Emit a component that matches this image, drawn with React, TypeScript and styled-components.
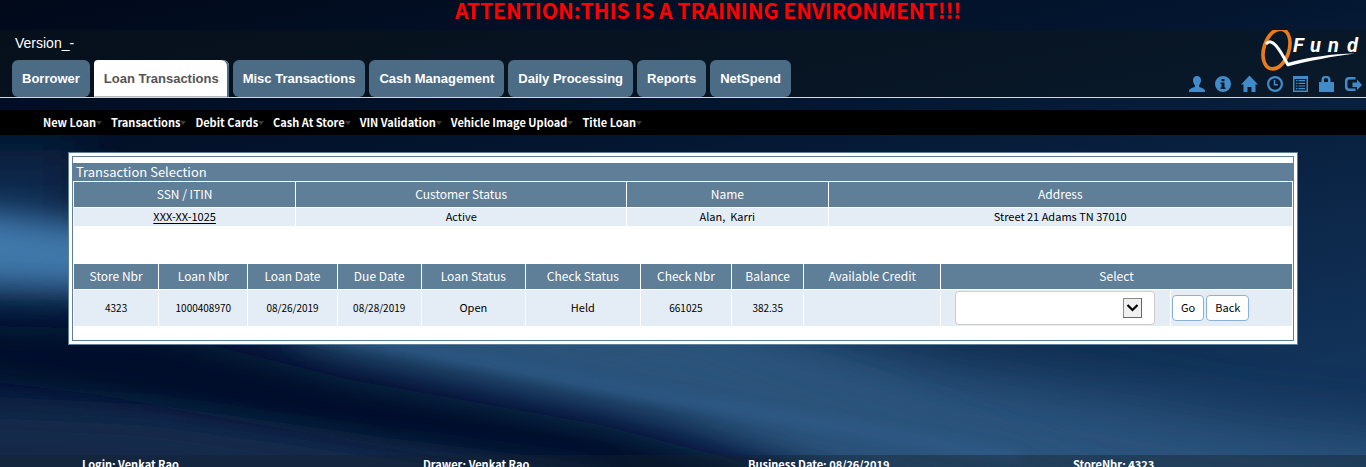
import React from "react";
import styled, { createGlobalStyle } from "styled-components";

const sans = `"Noto Sans CJK SC", "Noto Sans", sans-serif`;
const arial = `"Liberation Sans", Arial, sans-serif`;

const GlobalStyle = createGlobalStyle`
  *, *::before, *::after { box-sizing: border-box; }
  body {
    margin: 0;
    background: #020f26;
    font-family: ${sans};
    font-size: 11px;
    line-height: 18px;
    color: #000;
  }
`;

const Page = styled.div`
  position: relative;
  display: flex;
  flex-direction: column;
  height: 100vh;
  overflow: hidden;
`;

const Backdrop = styled.svg`
  position: absolute;
  inset: 0;
  width: 100%;
  height: 100%;
  z-index: -1;
`;

const Banner = styled.h1`
  margin: 0;
  height: 30px;
  padding-left: 50px;
  font-size: 21px;
  line-height: 20px;
  font-weight: 700;
  text-align: center;
  color: #f00;
`;

const Header = styled.header`
  display: flex;
  justify-content: space-between;
  height: 68px;
  border-bottom: 1px solid #d3d8de;
  background: rgba(12, 22, 26, 0.5);
`;

const HeaderLeft = styled.div`
  display: flex;
  flex-direction: column;
  justify-content: space-between;
  padding-left: 12px;
`;

const Version = styled.div`
  padding: 4px 3px;
  font: 14px/18px ${arial};
  color: #fff;
`;

const Tabs = styled.nav`
  display: flex;
  gap: 4px;
`;

const Tab = styled.a<{ $active?: boolean }>`
  padding: 0 10px;
  border-radius: 6px;
  font: bold 13px/37px ${arial};
  white-space: nowrap;
  text-decoration: none;
  color: ${(p) => (p.$active ? "#555" : "#fff")};
  background: ${(p) => (p.$active ? "#fff" : "#4c6b85")};
  ${(p) =>
    p.$active &&
    "border-radius: 4px 6px 0 0; box-shadow: inset -2px 0 #4c6b85, inset 0 -1px #b5bac0;"}
`;

const HeaderRight = styled.div`
  display: flex;
  flex-direction: column;
  align-items: flex-end;
  justify-content: space-between;
  padding: 0 5px 5px 0;
`;

const Tools = styled.div`
  display: flex;
  gap: 10px;
`;

const ToolButton = styled.button`
  width: 16px;
  height: 16px;
  padding: 0;
  border: 0;
  background: none;
  color: #428bca;

  svg {
    display: block;
    overflow: visible;
  }
`;

const MenuBar = styled.nav`
  display: flex;
  gap: 9px;
  margin-top: 12px;
  padding-left: 43px;
  height: 25px;
  background: #000;
`;

const MenuLink = styled.a`
  display: flex;
  align-items: center;
  font-size: 11px;
  font-weight: 700;
  line-height: 25px;
  white-space: nowrap;
  text-decoration: none;
  color: #fff;

  &::after {
    content: "";
    border: 3px solid transparent;
    border-top: 4px solid #3a3a3a;
    border-bottom: 0;
  }
`;

const Main = styled.main`
  flex: 1;
  min-height: 0;
  padding: 17px 68px 0;
`;

const Panel = styled.section`
  padding: 3px;
  border: 1px solid #5f7e97;
  background: #fff;
`;

const PanelInner = styled.div`
  padding: 6px 0 13px;
  border: 1px solid #5f7e97;
`;

const PanelTitle = styled.h2`
  margin: 0;
  padding-left: 3px;
  font-size: 13px;
  font-weight: 400;
  line-height: 18px;
  color: #fff;
  background: #5f7e97;
`;

const DataTable = styled.table`
  width: 100%;
  table-layout: fixed;
  border-collapse: separate;
  border-spacing: 1px;

  & + & {
    margin-top: 36px;
  }
`;

const Col = styled.col<{ $share: number }>`
  width: ${(p) => p.$share * 100}%;
`;

const HeadCell = styled.th`
  height: 25px;
  padding: 0 0 2px;
  font-size: 12px;
  font-weight: 400;
  color: #fff;
  background: #5f7e97;
`;

const Cell = styled.td<{ $tall?: boolean; $small?: boolean }>`
  height: ${(p) => (p.$tall ? 36 : 18)}px;
  padding: 0 0 ${(p) => (p.$small ? 0 : 2)}px;
  font-size: ${(p) => (p.$small ? 10 : 11)}px;
  line-height: 16px;
  text-align: center;
  white-space: pre;
  background: #e4edf5;
`;

const ControlCell = styled.td<{ $start: number }>`
  height: 36px;
  padding: 0 0 0 ${(p) => p.$start}px;
  background: #e4edf5;
`;

const SsnLink = styled.a`
  color: #000;
  text-decoration: underline;
  text-underline-offset: 2px;
`;

const SelectBox = styled.div`
  position: relative;
  width: 200px;
  height: 34px;

  svg {
    position: absolute;
    top: 7px;
    right: 13px;
    pointer-events: none;
  }
`;

const Select = styled.select`
  appearance: none;
  width: 100%;
  height: 100%;
  padding: 0 40px 0 12px;
  border: 1px solid #ccc;
  border-radius: 4px;
  font: 12px ${sans};
  background: #fff;
`;

const Actions = styled.div`
  display: flex;
  gap: 2px;
`;

const ActionButton = styled.button`
  height: 26px;
  padding: 0 8px 2px;
  border: 1px solid #86b3dc;
  border-radius: 4px;
  font: 11px/18px ${sans};
  color: #000;
  background: #fff;
`;

const Footer = styled.footer`
  display: grid;
  grid-template-columns: 341fr 325fr 325fr 293fr;
  height: 12px;
  padding-left: 82px;
  overflow: hidden;
  font-size: 11px;
  font-weight: 700;
  line-height: 18px;
  white-space: nowrap;
  color: #fff;
  background: rgba(20, 32, 44, 0.4);
`;

const tabs = ["Borrower", "Loan Transactions", "Misc Transactions", "Cash Management", "Daily Processing", "Reports", "NetSpend"];
const menu = ["New Loan", "Transactions", "Debit Cards", "Cash At Store", "VIN Validation", "Vehicle Image Upload", "Title Loan"];
const customerCols = [222, 331, 201, 465];
const loanCols = [85, 89, 89, 84, 104, 115, 91, 72, 137, 231, 122];
const loanHeads = ["Store Nbr", "Loan Nbr", "Loan Date", "Due Date", "Loan Status", "Check Status", "Check Nbr", "Balance", "Available Credit"];
const loan = ["4323", "1000408970", "08/26/2019", "08/28/2019", "Open", "Held", "661025", "382.35", ""];
const footer = ["Login: Venkat Rao", "Drawer: Venkat Rao", "Business Date: 08/26/2019", "StoreNbr: 4323"];

const icons: { label: string; art: React.ReactNode }[] = [
  {
    label: "User",
    art: <path d="M8 0c2.600 0 4 1.800 4 4.300 0 2-.8 3.800-2 4.900v1.300c0 .7 6 2 6 4V16H0v-1.500c0-2 6-3.300 6-4V9.200C4.800 8.100 4 6.300 4 4.300 4 1.800 5.400 0 8 0z" />,
  },
  {
    label: "Information",
    art: <path fillRule="evenodd" d="M8 0a8 8 0 1 1 0 16A8 8 0 0 1 8 0zM6.500 3v2.200h3V3zM5.500 6.500V8h1v3.500h-1V13h5v-1.500h-1v-5z" />,
  },
  {
    label: "Home",
    art: <path d="M8.500-.5 17 8.500h-2.500V16H10.500v-5h-4v5h-4V8.500H0z" />,
  },
  {
    label: "History",
    art: (
      <g fill="none" stroke="currentColor">
        <circle cx="8" cy="8" r="6.900" strokeWidth="2.200" />
        <path d="M7.500 4v4.700H11" strokeWidth="1.500" />
      </g>
    ),
  },
  {
    label: "List",
    art: (
      <path
        fillRule="evenodd"
        d="M0 0h15v16H0zM1.500 3v11.500h12V3zM3 4h1.500v1.200H3zm2.500 0H12v1.200H5.500zM3 6.700h1.500v1.200H3zm2.500 0H12v1.200H5.500zM3 9.400h1.500v1.200H3zm2.500 0H12v1.200H5.500zM3 12h1.500v1.200H3zm2.500 0H12v1.200H5.500z"
      />
    ),
  },
  {
    label: "Lock",
    art: <path fillRule="evenodd" d="M0 6H2.500V3.500C2.500 1.300 3.800 0 6 0h2C10.200 0 11.500 1.300 11.500 3.500V6h3.500v10H0zM5 6h4V3.800c0-1-.4-1.500-1.300-1.500H6.300c-.9 0-1.300.5-1.300 1.500z" />,
  },
  {
    label: "Log out",
    art: (
      <>
        <path d="M10.500 2.200H4.200Q1.200 2.200 1.200 5.200v5.600q0 3 3 3h6.300" fill="none" stroke="currentColor" strokeWidth="2.500" />
        <path d="M7.500 6.500h4.500v-3l5 5.500-5 5v-3H7.500z" />
      </>
    ),
  },
];

const total = (widths: number[]) => widths.reduce((a, b) => a + b, 0);

const Columns = ({ widths }: { widths: number[] }) => (
  <colgroup>
    {widths.map((w, i) => (
      <Col key={i} $share={w / total(widths)} />
    ))}
  </colgroup>
);

const Logo = () => (
  <svg width="102" height="41" viewBox="0 0 102 41" role="img" aria-label="QFund">
    <ellipse cx="17.500" cy="19" rx="12.500" ry="20.500" transform="rotate(18 17.500 19)" fill="none" stroke="#e87b1a" strokeWidth="3.600" />
    <path d="M7 14C13 7 20 18 29 35" fill="none" stroke="#fff" strokeWidth="3" />
    <path d="M27 33.500L30 32.500C52 27 72 24 96 23.500 72 26.500 52 30.500 28.500 36.500z" fill="#fff" />
    <g fontFamily="Roboto, 'Liberation Sans', sans-serif" fontWeight="700" fontStyle="italic" fontSize="20" fill="#fff">
      <text x="34" y="22">F</text>
      <text x="51" y="22">u</text>
      <text x="69" y="22">n</text>
      <text x="88" y="22">d</text>
    </g>
  </svg>
);

const NightSky = () => (
  <Backdrop viewBox="0 0 1366 467" preserveAspectRatio="none" aria-hidden="true">
    <defs>
      <linearGradient id="base" x1="0" y1="0" x2="0.600" y2="1">
        <stop offset="0" stopColor="#01091a" />
        <stop offset="0.400" stopColor="#03152f" />
        <stop offset="1" stopColor="#12335a" />
      </linearGradient>
      <filter id="soft" x="-30%" y="-50%" width="160%" height="200%">
        <feGaussianBlur stdDeviation="28" />
      </filter>
      <filter id="edge" x="-30%" y="-50%" width="160%" height="200%">
        <feGaussianBlur stdDeviation="16" />
      </filter>
      <filter id="fine" x="-30%" y="-50%" width="160%" height="200%">
        <feGaussianBlur stdDeviation="6" />
      </filter>
    </defs>
    <rect width="1366" height="467" fill="url(#base)" />
    <path d="M-60 150H80V300H-60z" fill="#0d2c50" filter="url(#soft)" />
    <path d="M300 260L700 300 950 370 1250 420 1460 440V560H1000L683 405 300 330z" fill="#29527c" filter="url(#soft)" />
    <path d="M300 290L700 330 900 400 1150 500H1020L850 455 683 410 480 370 300 335z" fill="#29527a" filter="url(#edge)" />
    <path d="M-60 205L90 225 160 240V295L80 290-60 284z" fill="#4078ab" filter="url(#edge)" />
    <path d="M-60 325L150 330 350 380 600 425 850 490 700 500 400 450 100 395-60 375z" fill="#00112a" filter="url(#edge)" />
    <path d="M-60 405L150 415 400 450 600 475V520H-60z" fill="#12294c" filter="url(#edge)" opacity="0.900" />
    <path d="M300 330L480 361 584 382 683 400 850 428 1020 458" fill="none" stroke="#316293" strokeWidth="10" filter="url(#fine)" opacity="0.600" />
  </Backdrop>
);

export default function App() {
  return (
    <Page>
      <GlobalStyle />
      <NightSky />
      <Banner>ATTENTION:THIS IS A TRAINING ENVIRONMENT!!!</Banner>
      <Header>
        <HeaderLeft>
          <Version>Version_-</Version>
          <Tabs>
            {tabs.map((t, i) => (
              <Tab key={t} href="#" $active={i === 1}>
                {t}
              </Tab>
            ))}
          </Tabs>
        </HeaderLeft>
        <HeaderRight>
          <Logo />
          <Tools>
            {icons.map((icon) => (
              <ToolButton key={icon.label} aria-label={icon.label}>
                <svg width="16" height="16" viewBox="0 0 16 16" fill="currentColor">
                  {icon.art}
                </svg>
              </ToolButton>
            ))}
          </Tools>
        </HeaderRight>
      </Header>
      <MenuBar>
        {menu.map((m) => (
          <MenuLink key={m} href="#">
            {m}
          </MenuLink>
        ))}
      </MenuBar>
      <Main>
        <Panel>
          <PanelInner>
            <PanelTitle>Transaction Selection</PanelTitle>
            <DataTable>
              <Columns widths={customerCols} />
              <thead>
                <tr>
                  <HeadCell>SSN / ITIN</HeadCell>
                  <HeadCell>Customer Status</HeadCell>
                  <HeadCell>Name</HeadCell>
                  <HeadCell>Address</HeadCell>
                </tr>
              </thead>
              <tbody>
                <tr>
                  <Cell>
                    <SsnLink href="#">XXX-XX-1025</SsnLink>
                  </Cell>
                  <Cell>Active</Cell>
                  <Cell>{"Alan,  Karri"}</Cell>
                  <Cell>Street 21 Adams TN 37010</Cell>
                </tr>
              </tbody>
            </DataTable>
            <DataTable>
              <Columns widths={loanCols} />
              <thead>
                <tr>
                  {loanHeads.map((h) => (
                    <HeadCell key={h}>{h}</HeadCell>
                  ))}
                  <HeadCell colSpan={2}>Select</HeadCell>
                </tr>
              </thead>
              <tbody>
                <tr>
                  {loan.map((v, i) => (
                    <Cell key={i} $tall $small={/^\d/.test(v)}>
                      {v}
                    </Cell>
                  ))}
                  <ControlCell $start={14}>
                    <SelectBox>
                      <Select aria-label="Select transaction" defaultValue="">
                        <option value="" />
                      </Select>
                      <svg width="19" height="20" viewBox="0 0 19 20" aria-hidden="true">
                        <rect x="0.500" y="0.500" width="18" height="19" fill="#f0f0f0" stroke="#8a8a8a" />
                        <path d="M18.500 0V19.500H0" fill="none" stroke="#666" />
                        <path d="M4.500 7l5 5 5-5" fill="none" stroke="#000" strokeWidth="2.200" />
                      </svg>
                    </SelectBox>
                  </ControlCell>
                  <ControlCell $start={1}>
                    <Actions>
                      <ActionButton>Go</ActionButton>
                      <ActionButton>Back</ActionButton>
                    </Actions>
                  </ControlCell>
                </tr>
              </tbody>
            </DataTable>
          </PanelInner>
        </Panel>
      </Main>
      <Footer>
        {footer.map((f) => (
          <span key={f}>{f}</span>
        ))}
      </Footer>
    </Page>
  );
}
